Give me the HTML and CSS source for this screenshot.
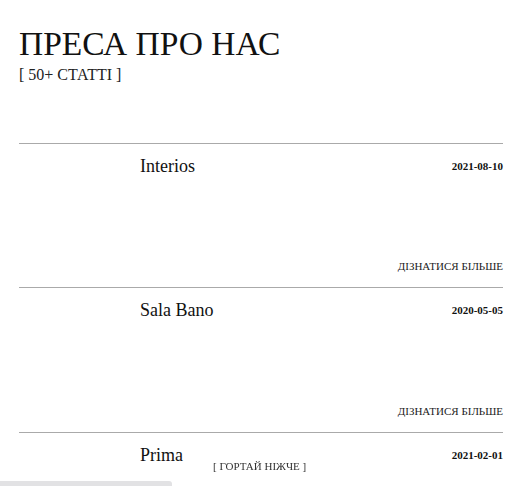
FILE: index.html
```html
<!DOCTYPE html>
<html lang="uk">
<head>
<meta charset="utf-8">
<link rel="stylesheet" href="styles.css">
</head>
<body>
<main class="page">
  <header class="head">
    <h1 class="title">ПРЕСА ПРО НАС</h1>
    <p class="count">[ 50+ СТАТТІ ]</p>
  </header>
  <section class="list">
    <article class="item">
      <h2 class="name">Interios</h2>
      <span class="date">2021-08-10</span>
      <a class="more">ДІЗНАТИСЯ БІЛЬШЕ</a>
    </article>
    <article class="item">
      <h2 class="name">Sala Bano</h2>
      <span class="date">2020-05-05</span>
      <a class="more">ДІЗНАТИСЯ БІЛЬШЕ</a>
    </article>
    <article class="item">
      <h2 class="name">Prima</h2>
      <span class="date">2021-02-01</span>
      <a class="more">ДІЗНАТИСЯ БІЛЬШЕ</a>
    </article>
  </section>
</main>
<div class="hint">[ ГОРТАЙ НІЖЧЕ ]</div>
<div class="bar"></div>
</body>
</html>
```

FILE: styles.css
```css
html, body {
  margin: 0;
  padding: 0;
  background: #fff;
  color: #111;
  font-family: "Liberation Serif", "Times New Roman", serif;
}
.page {
  padding: 0 9px 0 19px;
  height: 486px;
  overflow: hidden;
}
.head {
  padding-top: 24px;
  height: 143px;
  box-sizing: border-box;
}
.title {
  margin: 0;
  font-weight: normal;
  font-size: 33.5px;
  line-height: 40px;
}
.count {
  margin: 0;
  font-size: 16px;
  line-height: 21px;
  color: #222;
}
.item {
  border-top: 1px solid #aaa;
  height: 144px;
  box-sizing: border-box;
  display: grid;
  grid-template-columns: 121px 1fr auto;
  grid-template-rows: auto 1fr auto;
  padding: 12px 0 14px;
}
.item + .item {
  height: 145px;
}
.name {
  grid-column: 2;
  grid-row: 1;
  margin: 0;
  font-weight: normal;
  font-size: 18px;
  line-height: 20px;
}
.date {
  grid-column: 3;
  grid-row: 1;
  font-weight: bold;
  font-size: 11px;
  line-height: 20px;
}
.more {
  grid-column: 1 / 4;
  grid-row: 3;
  justify-self: end;
  font-size: 11px;
  line-height: 14px;
  color: #222;
}
.hint {
  position: fixed;
  left: 213px;
  bottom: 13px;
  font-size: 11px;
  line-height: 14px;
  color: #333;
}
.bar {
  position: fixed;
  left: 0;
  bottom: 0;
  width: 172px;
  height: 5px;
  background: #e2e2e4;
  border-radius: 0 3px 0 0;
}
```
